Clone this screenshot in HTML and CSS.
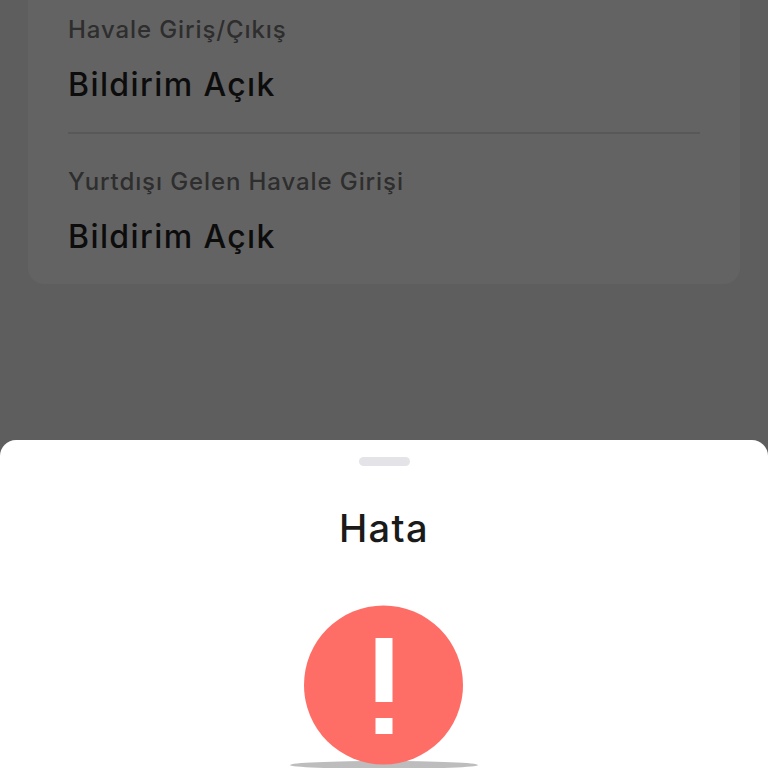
FILE: index.html
```html
<!DOCTYPE html>
<html lang="tr">
<head>
    <meta charset="UTF-8">
    <meta name="viewport" content="width=device-width, initial-scale=1.0">
    <title>Bildirim Ayarları</title>
    <link rel="stylesheet" href="styles.css">
</head>
<body>
    <div class="page">
        <div class="card">
            <div class="row">
                <div class="row-label">Havale Giriş/Çıkış</div>
                <div class="row-value">Bildirim Açık</div>
            </div>
            <div class="row">
                <div class="row-label">Yurtdışı Gelen Havale Girişi</div>
                <div class="row-value">Bildirim Açık</div>
            </div>
        </div>
    </div>

    <div class="sheet">
        <div class="handle"></div>
        <h2 class="sheet-title">Hata</h2>
        <div class="error-icon">
            <div class="error-shadow"></div>
            <svg class="error-circle" width="160" height="160" viewBox="0 0 160 160">
                <circle cx="79.5" cy="80" r="79.5" fill="#ff6e66"/>
                <rect x="71.5" y="33" width="17" height="64" fill="#fff"/>
                <rect x="71.5" y="113" width="17" height="16" fill="#fff"/>
            </svg>
        </div>
    </div>
</body>
</html>
```

FILE: styles.css
```css
html, body {
    margin: 0;
    padding: 0;
    height: 100%;
    overflow: hidden;
}
body {
    font-family: Inter, "Liberation Sans", sans-serif;
    background-color: #5e5e5e;
}
.page {
    padding: 0 28px;
}
.card {
    background-color: #636363;
    border-radius: 0 0 16px 16px;
    padding: 0 40px;
    margin-top: -4px;
}
.row {
    padding: 19px 0 27px;
    border-bottom: 2px solid #585858;
}
.row:last-child {
    padding: 33px 0 27px;
    border-bottom: none;
}
.row-label {
    font-size: 24px;
    line-height: 30px;
    letter-spacing: 0.9px;
    font-weight: 500;
    color: #2e2e2e;
    margin-bottom: 20px;
}
.row-value {
    font-size: 32px;
    line-height: 40px;
    letter-spacing: 1.4px;
    font-weight: 500;
    color: #0c0c0c;
}
.sheet {
    position: fixed;
    left: 0;
    right: 0;
    top: 440px;
    bottom: 0;
    background-color: #fff;
    border-radius: 16px 16px 0 0;
    display: flex;
    flex-direction: column;
    align-items: center;
}
.handle {
    width: 51px;
    height: 9px;
    border-radius: 5px;
    background-color: #e4e4e8;
    margin-top: 17px;
}
.sheet-title {
    margin: 38px 0 0;
    font-size: 38px;
    line-height: 48px;
    letter-spacing: 1.4px;
    font-weight: 500;
    color: #1a1a1a;
}
.error-icon {
    position: relative;
    width: 188px;
    height: 168px;
    margin-top: 53px;
    display: flex;
    justify-content: center;
}
.error-circle {
    position: relative;
}
.error-shadow {
    position: absolute;
    left: 0;
    top: 156px;
    width: 188px;
    height: 8px;
    border-radius: 50%;
    background-color: #bdbdbd;
}
```
